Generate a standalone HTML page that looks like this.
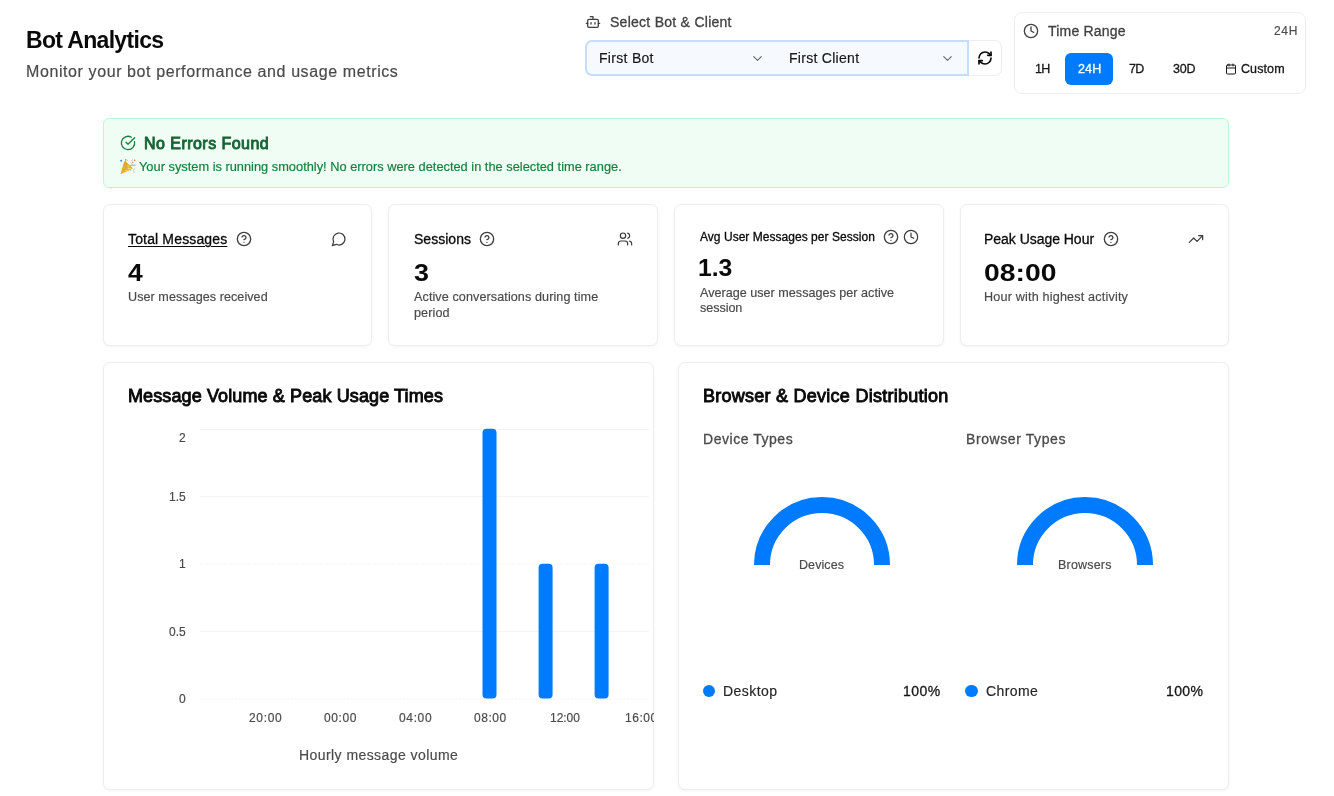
<!DOCTYPE html>
<html lang="en">
<head>
<meta charset="utf-8">
<title>Bot Analytics</title>
<style>
*{box-sizing:border-box;margin:0;padding:0}
html,body{width:1334px;height:796px;overflow:hidden;background:#fff}
body{font-family:"Liberation Sans",Arial,sans-serif;color:#0a0a0a;position:relative}
.t{position:absolute;white-space:nowrap;line-height:1;font-weight:400;will-change:transform}
svg{display:block;position:absolute;overflow:visible}
.ico{fill:none;stroke:currentColor;stroke-width:2;stroke-linecap:round;stroke-linejoin:round}
.selbox{position:absolute;left:585px;top:40px;width:384px;height:36px;background:#f6f9fe;border:2px solid #c5dcfb;border-radius:7px 0 0 7px}
.refresh{position:absolute;left:969px;top:40px;width:33px;height:36px;background:#fff;border:1px solid #eceef1;border-left:none;border-radius:0 7px 7px 0}
.range{position:absolute;left:1014px;top:12px;width:292px;height:82px;border:1px solid #eceef1;border-radius:8px;background:#fff}
.rb-active{position:absolute;left:1065px;top:53px;width:48px;height:32px;border-radius:6px;background:#007bff}
.alert{position:absolute;left:103px;top:118px;width:1126px;height:70px;background:#f0fdf4;border:1px solid #bbf7d0;border-radius:6px}
.card{position:absolute;background:#fff;border:1px solid #eceef1;border-radius:7px;box-shadow:0 1px 3px rgba(0,0,0,.05)}
.dot{position:absolute;width:12.2px;height:12.2px;border-radius:50%;background:#007bff}
</style>
</head>
<body>

<header>
 <div class="page-title">
   <h1 class="t" id="h1" style="top:29px;font-size:23px;color:#0a0a0a;font-weight:700;left:26.00px;letter-spacing:-0.667px;">Bot Analytics</h1>
   <p class="t" id="sub" style="top:64px;font-size:16px;color:#4a4a4a;-webkit-text-stroke:0.18px currentColor;left:26.00px;letter-spacing:0.596px;">Monitor your bot performance and usage metrics</p>
 </div>
 <div class="bot-client-select">
  <svg class="ico" aria-hidden="true" style="left:584.9px;top:14px;color:#404040" width="16" height="16" viewBox="0 0 24 24"><path d="M12 8V4H8"/><rect width="16" height="12" x="4" y="8" rx="2"/><path d="M2 14h2"/><path d="M20 14h2"/><path d="M15 13v2"/><path d="M9 13v2"/></svg>
  <div class="selbox"></div>
  <div class="refresh"></div>
  <svg class="ico" aria-hidden="true" style="left:749.7px;top:50.5px;color:#686868;stroke-width:1.8" width="15" height="15" viewBox="0 0 24 24"><path d="m6 9 6 6 6-6"/></svg>
  <svg class="ico" aria-hidden="true" style="left:939.7px;top:50.5px;color:#686868;stroke-width:1.8" width="15" height="15" viewBox="0 0 24 24"><path d="m6 9 6 6 6-6"/></svg>
  <svg class="ico" aria-hidden="true" style="left:977.05px;top:49.95px;color:#0a0a0a;stroke-width:2.5" width="16" height="16" viewBox="0 0 24 24"><path d="M3 12a9 9 0 0 1 9-9 9.75 9.75 0 0 1 6.74 2.74L21 8"/><path d="M21 3v5h-5"/><path d="M21 12a9 9 0 0 1-9 9 9.75 9.75 0 0 1-6.74-2.74L3 16"/><path d="M8 16H3v5"/></svg>
   <label class="t" id="sell" style="top:15px;font-size:14px;color:#404040;-webkit-text-stroke:0.3px currentColor;left:610.00px;letter-spacing:0.265px;">Select Bot &amp; Client</label>
   <div class="t" id="fb" style="top:51px;font-size:14px;color:#171717;-webkit-text-stroke:0.18px currentColor;left:599.00px;letter-spacing:0.297px;">First Bot</div>
   <div class="t" id="fc" style="top:51px;font-size:14px;color:#171717;-webkit-text-stroke:0.18px currentColor;left:789.00px;letter-spacing:0.286px;">First Client</div>
 </div>
 <div class="time-range">
  <div class="range"></div>
  <svg class="ico" aria-hidden="true" style="left:1023.2px;top:23.2px;color:#404040" width="16" height="16" viewBox="0 0 24 24"><circle cx="12" cy="12" r="10"/><polyline points="12 6 12 12 16 14"/></svg>
  <div class="rb-active"></div>
  <svg class="ico" aria-hidden="true" style="left:1224.8px;top:63.2px;color:#171717" width="12" height="12" viewBox="0 0 24 24"><path d="M8 2v4"/><path d="M16 2v4"/><rect width="18" height="18" x="3" y="4" rx="2"/><path d="M3 10h18"/></svg>
   <div class="t" id="tr" style="top:24px;font-size:14px;color:#404040;-webkit-text-stroke:0.3px currentColor;left:1048.00px;letter-spacing:0.191px;">Time Range</div>
   <div class="t" id="tr24" style="top:25px;font-size:12px;color:#4a4a4a;-webkit-text-stroke:0.18px currentColor;left:1274.00px;letter-spacing:0.684px;">24H</div>
   <div role="button" class="t" id="b1h" style="top:63px;font-size:12.5px;color:#171717;-webkit-text-stroke:0.3px currentColor;left:1035.00px;letter-spacing:-0.800px;">1H</div>
   <div role="button" class="t" id="b24" style="top:63px;font-size:12.5px;color:#ffffff;-webkit-text-stroke:0.3px currentColor;left:1078.00px;letter-spacing:0.124px;">24H</div>
   <div role="button" class="t" id="b7d" style="top:63px;font-size:12.5px;color:#171717;-webkit-text-stroke:0.3px currentColor;left:1129.00px;letter-spacing:-0.700px;">7D</div>
   <div role="button" class="t" id="b30" style="top:63px;font-size:12.5px;color:#171717;-webkit-text-stroke:0.3px currentColor;left:1173.00px;letter-spacing:-0.180px;">30D</div>
   <div role="button" class="t" id="bcu" style="top:63px;font-size:12.5px;color:#171717;-webkit-text-stroke:0.3px currentColor;left:1241.00px;letter-spacing:0.096px;">Custom</div>
 </div>
</header>

<main>
 <section class="status">
  <div class="alert"></div>
  <svg class="ico" aria-hidden="true" style="left:120px;top:134.7px;color:#15803d" width="16" height="16" viewBox="0 0 24 24"><path d="M21.801 10A10 10 0 1 1 17 3.335"/><path d="m9 11 3 3L22 4"/></svg>
  <svg role="img" aria-label="party popper" style="left:119.5px;top:158.6px" width="16" height="15.6" viewBox="0 0 16 15.6">
 <polygon points="0.5,15.2 3.6,4.2 5.2,1.8 7.6,4.4 12.4,9.4 9,11.6" fill="#e8ab1e"/>
 <polygon points="7.2,5.6 9.4,6.4 9.8,8 7.6,7.4" fill="#f7df4a"/>
 <polygon points="7.2,8.8 11.6,8.8 12,9.6 8.4,10.6" fill="#f9e04c"/>
 <polygon points="4.8,11.4 7.8,10.6 7.2,12.2 5.2,12.6" fill="#f9e04c"/>
 <polygon points="2.4,13.8 4.6,13 3.8,14.4" fill="#f9e04c"/>
 <g stroke="#b4b1ba" stroke-width="1" fill="none"><path d="M2.8 6.4 L8.4 11.6"/><path d="M1.6 10 L5.2 13.4"/></g>
 <path d="M4.4 2.6 L12.4 9.4" stroke="#d9894a" stroke-width="0.8" fill="none"/>
 <circle cx="1.2" cy="1.7" r="1" fill="#3b8cff"/>
 <circle cx="5.7" cy="0.9" r="0.8" fill="#d98547"/>
 <circle cx="14.7" cy="1.4" r="0.8" fill="#d98547"/>
 <circle cx="12.8" cy="3.5" r="0.7" fill="#d98547"/>
 <path d="M11.4 1.6 l1.6 -0.9 M10.8 3.4 l0.6 1.2 M7.2 1.2 l1 .6" stroke="#b0b0b8" stroke-width="0.9" fill="none"/>
 <path d="M10.6 6.4 L15.2 6" stroke="#7eb1ff" stroke-width="1.1" stroke-linecap="round" fill="none"/>
 <path d="M14.4 9.4 l-0.7 2.2 l0.5 2.2" stroke="#c2c2c9" stroke-width="0.9" fill="none"/>
 <circle cx="10.7" cy="11.6" r="0.55" fill="#7eb1ff"/>
</svg>
   <h2 class="t" id="al1" style="top:136px;font-size:16px;color:#166534;-webkit-text-stroke:0.9px currentColor;left:144.00px;letter-spacing:0.462px;">No Errors Found</h2>
   <p class="t" id="al2" style="top:161px;font-size:12.8px;color:#15803d;-webkit-text-stroke:0.18px currentColor;left:139.00px;letter-spacing:0.011px;">Your system is running smoothly! No errors were detected in the selected time range.</p>
 </section>

 <section class="stats">
  <article>
   <div class="card" style="left:103px;top:204px;width:269px;height:142px"></div>
   <svg class="ico" aria-hidden="true" style="left:235.7px;top:231px;color:#404040;stroke-width:2" width="16" height="16" viewBox="0 0 24 24"><circle cx="12" cy="12" r="10"/><path d="M9.09 9a3 3 0 0 1 5.83 1c0 2-3 3-3 3"/><path d="M12 17h.01"/></svg>
   <svg class="ico" aria-hidden="true" style="left:331px;top:231px;color:#3a3a3a;stroke-width:1.8" width="16" height="16" viewBox="0 0 24 24"><path d="M7.9 20A9 9 0 1 0 4 16.1L2 22Z"/></svg>
   <h3 class="t" id="c1t" style="top:232px;font-size:14px;color:#0a0a0a;-webkit-text-stroke:0.3px currentColor;left:128.00px;letter-spacing:0.152px;text-decoration:underline;text-underline-offset:2px;text-decoration-thickness:1px;">Total Messages</h3>
   <div class="t" id="c1v" style="top:261px;font-size:24px;color:#0a0a0a;font-weight:700;transform:scaleX(1.1);transform-origin:0 50%;left:128.00px;">4</div>
   <p class="t" id="c1d" style="top:291px;font-size:12.6px;color:#4a4a4a;-webkit-text-stroke:0.18px currentColor;left:128.00px;letter-spacing:0.050px;">User messages received</p>
  </article>
  <article>
   <div class="card" style="left:388px;top:204px;width:270px;height:142px"></div>
   <svg class="ico" aria-hidden="true" style="left:478.7px;top:231px;color:#404040;stroke-width:2" width="16" height="16" viewBox="0 0 24 24"><circle cx="12" cy="12" r="10"/><path d="M9.09 9a3 3 0 0 1 5.83 1c0 2-3 3-3 3"/><path d="M12 17h.01"/></svg>
   <svg class="ico" aria-hidden="true" style="left:617px;top:231px;color:#3a3a3a;stroke-width:1.8" width="16" height="16" viewBox="0 0 24 24"><path d="M16 21v-2a4 4 0 0 0-4-4H6a4 4 0 0 0-4 4v2"/><circle cx="9" cy="7" r="4"/><path d="M22 21v-2a4 4 0 0 0-3-3.87"/><path d="M16 3.13a4 4 0 0 1 0 7.75"/></svg>
   <h3 class="t" id="c2t" style="top:232px;font-size:14px;color:#0a0a0a;-webkit-text-stroke:0.3px currentColor;left:414.00px;letter-spacing:0.018px;">Sessions</h3>
   <div class="t" id="c2v" style="top:261px;font-size:24px;color:#0a0a0a;font-weight:700;transform:scaleX(1.12);transform-origin:0 50%;left:414.00px;">3</div>
   <p class="t" id="c2d" style="top:291px;font-size:12.6px;color:#4a4a4a;-webkit-text-stroke:0.18px currentColor;left:414.00px;letter-spacing:0.093px;">Active conversations during time</p>
   <p class="t" id="c2e" style="top:307px;font-size:12.6px;color:#4a4a4a;-webkit-text-stroke:0.18px currentColor;left:414.00px;letter-spacing:0.101px;">period</p>
  </article>
  <article>
   <div class="card" style="left:674px;top:204px;width:270px;height:142px"></div>
   <svg class="ico" aria-hidden="true" style="left:882.9px;top:229.3px;color:#404040;stroke-width:2" width="16" height="16" viewBox="0 0 24 24"><circle cx="12" cy="12" r="10"/><path d="M9.09 9a3 3 0 0 1 5.83 1c0 2-3 3-3 3"/><path d="M12 17h.01"/></svg>
   <svg class="ico" aria-hidden="true" style="left:903.1px;top:229.3px;color:#3a3a3a;stroke-width:1.8" width="16" height="16" viewBox="0 0 24 24"><circle cx="12" cy="12" r="10"/><polyline points="12 6 12 12 16 14"/></svg>
   <h3 class="t" id="c3t" style="top:231px;font-size:12px;color:#0a0a0a;-webkit-text-stroke:0.3px currentColor;left:700.00px;letter-spacing:0.034px;">Avg User Messages per Session</h3>
   <div class="t" id="c3v" style="top:256px;font-size:24px;color:#0a0a0a;font-weight:700;transform:scaleX(1.03);transform-origin:0 50%;left:698.00px;">1.3</div>
   <p class="t" id="c3d" style="top:287px;font-size:12.6px;color:#4a4a4a;-webkit-text-stroke:0.18px currentColor;left:700.00px;letter-spacing:0.012px;">Average user messages per active</p>
   <p class="t" id="c3e" style="top:302px;font-size:12.6px;color:#4a4a4a;-webkit-text-stroke:0.18px currentColor;left:700.00px;letter-spacing:-0.057px;">session</p>
  </article>
  <article>
   <div class="card" style="left:960px;top:204px;width:269px;height:142px"></div>
   <svg class="ico" aria-hidden="true" style="left:1103px;top:231px;color:#404040;stroke-width:2" width="16" height="16" viewBox="0 0 24 24"><circle cx="12" cy="12" r="10"/><path d="M9.09 9a3 3 0 0 1 5.83 1c0 2-3 3-3 3"/><path d="M12 17h.01"/></svg>
   <svg class="ico" aria-hidden="true" style="left:1188px;top:231px;color:#3a3a3a;stroke-width:1.8" width="16" height="16" viewBox="0 0 24 24"><polyline points="22 7 13.5 15.5 8.5 10.5 2 17"/><polyline points="16 7 22 7 22 13"/></svg>
   <h3 class="t" id="c4t" style="top:232px;font-size:14px;color:#0a0a0a;-webkit-text-stroke:0.3px currentColor;left:984.00px;letter-spacing:-0.033px;">Peak Usage Hour</h3>
   <div class="t" id="c4v" style="top:261px;font-size:24px;color:#0a0a0a;font-weight:700;transform:scaleX(1.18);transform-origin:0 50%;left:984.00px;">08:00</div>
   <p class="t" id="c4d" style="top:291px;font-size:12.6px;color:#4a4a4a;-webkit-text-stroke:0.18px currentColor;left:984.00px;letter-spacing:0.184px;">Hour with highest activity</p>
  </article>
 </section>

 <section class="charts">
  <article>
   <div class="card" style="left:103px;top:362px;width:551px;height:428px"></div>
   <svg aria-hidden="true" style="left:103px;top:362px" width="551" height="428" viewBox="103 362 551 428">
    <g stroke="#f4f4f6" stroke-width="1">
     <line x1="200" x2="649" y1="429.5" y2="429.5"/>
     <line x1="200" x2="649" y1="496.5" y2="496.5"/>
     <line x1="200" x2="649" y1="564" y2="564" stroke-dasharray="2 1"/>
     <line x1="200" x2="649" y1="631.5" y2="631.5"/>
     <line x1="200" x2="649" y1="699" y2="699" stroke-dasharray="2 1.5"/>
    </g>
    <g fill="#007bff">
     <rect x="482.5" y="428.8" width="14" height="269.8" rx="4"/>
     <rect x="538.6" y="563.7" width="14" height="134.9" rx="4"/>
     <rect x="594.6" y="563.7" width="14" height="134.9" rx="4"/>
    </g>
   </svg>
   <h2 class="t" id="g1t" style="top:387px;font-size:18px;color:#0a0a0a;-webkit-text-stroke:0.9px currentColor;left:128.00px;letter-spacing:0.117px;">Message Volume &amp; Peak Usage Times</h2>
   <div class="t" id="gx" style="top:748px;font-size:14px;color:#4a4a4a;-webkit-text-stroke:0.18px currentColor;left:299.00px;letter-spacing:0.433px;">Hourly message volume</div>
   <div class="t" id="y0" style="top:432px;font-size:12px;color:#4a4a4a;-webkit-text-stroke:0.18px currentColor;right:1148.50px;">2</div>
   <div class="t" id="y1" style="top:491px;font-size:12px;color:#4a4a4a;-webkit-text-stroke:0.18px currentColor;right:1148.50px;">1.5</div>
   <div class="t" id="y2" style="top:558px;font-size:12px;color:#4a4a4a;-webkit-text-stroke:0.18px currentColor;right:1148.50px;">1</div>
   <div class="t" id="y3" style="top:626px;font-size:12px;color:#4a4a4a;-webkit-text-stroke:0.18px currentColor;right:1148.50px;">0.5</div>
   <div class="t" id="y4" style="top:693px;font-size:12px;color:#4a4a4a;-webkit-text-stroke:0.18px currentColor;right:1148.50px;">0</div>
   <div class="t" id="x0" style="top:712px;font-size:12px;color:#4a4a4a;-webkit-text-stroke:0.18px currentColor;left:249.00px;letter-spacing:0.691px;">20:00</div>
   <div class="t" id="x1" style="top:712px;font-size:12px;color:#4a4a4a;-webkit-text-stroke:0.18px currentColor;left:324.00px;letter-spacing:0.611px;">00:00</div>
   <div class="t" id="x2" style="top:712px;font-size:12px;color:#4a4a4a;-webkit-text-stroke:0.18px currentColor;left:399.00px;letter-spacing:0.642px;">04:00</div>
   <div class="t" id="x3" style="top:712px;font-size:12px;color:#4a4a4a;-webkit-text-stroke:0.18px currentColor;left:474.00px;letter-spacing:0.562px;">08:00</div>
   <div class="t" id="x4" style="top:712px;font-size:12px;color:#4a4a4a;-webkit-text-stroke:0.18px currentColor;left:550.00px;letter-spacing:-0.034px;">12:00</div>
   <div class="t" id="x5" style="top:712px;font-size:12px;color:#4a4a4a;-webkit-text-stroke:0.18px currentColor;left:625.00px;letter-spacing:0.562px;clip-path:inset(0 4.84px 0 0);">16:00</div>
  </article>
  <article>
   <div class="card" style="left:678px;top:362px;width:551px;height:428px"></div>
   <svg aria-hidden="true" style="left:678px;top:362px" width="551" height="428" viewBox="678 362 551 428">
    <g fill="none" stroke="#007bff" stroke-width="16">
     <path d="M762 565 A60 60 0 0 1 882 565"/>
     <path d="M1025 565 A60 60 0 0 1 1145 565"/>
    </g>
   </svg>
   <div class="dot" style="left:702.9px;top:684.75px"></div>
   <div class="dot" style="left:965.4px;top:684.75px"></div>
   <h2 class="t" id="g2t" style="top:387px;font-size:18px;color:#0a0a0a;-webkit-text-stroke:0.9px currentColor;left:703.00px;letter-spacing:0.256px;">Browser &amp; Device Distribution</h2>
   <h3 class="t" id="dt" style="top:432px;font-size:14px;color:#4a4a4a;-webkit-text-stroke:0.3px currentColor;left:703.00px;letter-spacing:0.532px;">Device Types</h3>
   <h3 class="t" id="bt" style="top:432px;font-size:14px;color:#4a4a4a;-webkit-text-stroke:0.3px currentColor;left:966.00px;letter-spacing:0.587px;">Browser Types</h3>
   <div class="t" id="dv" style="top:559px;font-size:12.5px;color:#4a4a4a;-webkit-text-stroke:0.18px currentColor;left:799.00px;letter-spacing:0.081px;">Devices</div>
   <div class="t" id="bw" style="top:559px;font-size:12.5px;color:#4a4a4a;-webkit-text-stroke:0.18px currentColor;left:1058.00px;letter-spacing:0.190px;">Browsers</div>
   <div class="t" id="lg1" style="top:684px;font-size:14px;color:#262626;-webkit-text-stroke:0.18px currentColor;left:723.00px;letter-spacing:0.454px;">Desktop</div>
   <div class="t" id="lp1" style="top:684px;font-size:14px;color:#171717;-webkit-text-stroke:0.3px currentColor;left:903.00px;letter-spacing:0.488px;">100%</div>
   <div class="t" id="lg2" style="top:684px;font-size:14px;color:#262626;-webkit-text-stroke:0.18px currentColor;left:986.00px;letter-spacing:0.397px;">Chrome</div>
   <div class="t" id="lp2" style="top:684px;font-size:14px;color:#171717;-webkit-text-stroke:0.3px currentColor;left:1166.00px;letter-spacing:0.353px;">100%</div>
  </article>
 </section>
</main>

</body>
</html>
